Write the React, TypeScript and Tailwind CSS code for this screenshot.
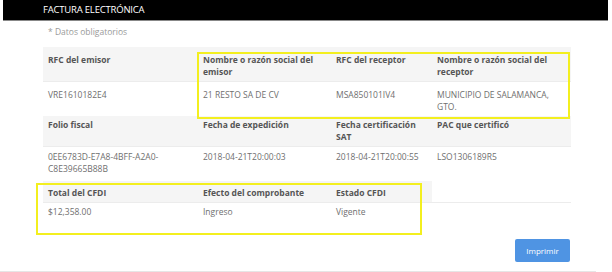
const font = { fontFamily: '"Open Sans", "Liberation Sans", sans-serif' };

type Cell = string;

function HeaderRow({ cells, pad, shadeCols = 4 }: { cells: Cell[]; pad: string; shadeCols?: number }) {
  return (
    <div className="grid grid-cols-[155px_133px_101px_139px] border-b border-[#ececec]">
      {cells.map((c, i) => (
        <div
          key={i}
          className={`px-[5px] ${pad} text-[8.5px] leading-[12px] font-bold text-[#555] ${i < shadeCols ? "bg-[#f5f5f5]" : ""}`}
        >
          {c}
        </div>
      ))}
    </div>
  );
}

function DataRow({ cells, pad }: { cells: Cell[]; pad: string }) {
  return (
    <div className="grid grid-cols-[155px_133px_101px_139px]">
      {cells.map((c, i) => (
        <div key={i} className={`px-[5px] ${pad} text-[8.5px] leading-[12px] text-[#6f6f6f]`}>
          {c}
        </div>
      ))}
    </div>
  );
}

export default function App() {
  return (
    <div className="relative w-[612px] h-[272px] bg-white overflow-hidden" style={font}>
      <div className="mx-[3px] w-[605px] h-[21px] bg-black border-b border-[#888] flex items-center pl-[40px]">
        <span className="text-white text-[9.5px] tracking-[-0.2px]">FACTURA ELECTRÓNICA</span>
      </div>

      <div className="pl-[48px] pt-[5px] text-[8.5px] leading-[12px] text-[#9a9a9a]">* Datos obligatorios</div>

      <div className="ml-[43px] mt-[9px] w-[528px]">
        <HeaderRow
          pad="pt-[7px] pb-[3px]"
          cells={["RFC del emisor", "Nombre o razón social del emisor", "RFC del receptor", "Nombre o razón social del receptor"]}
        />
        <DataRow
          pad="pt-[7px] pb-[3px]"
          cells={["VRE1610182E4", "21 RESTO SA DE CV", "MSA850101IV4", "MUNICIPIO DE SALAMANCA, GTO."]}
        />
        <HeaderRow
          pad="pt-[3px] pb-[3px]"
          cells={["Folio fiscal", "Fecha de expedición", "Fecha certificación SAT", "PAC que certificó"]}
        />
        <DataRow
          pad="pt-[4px] pb-[6px]"
          cells={["0EE6783D-E7A8-4BFF-A2A0-C8E39665B88B", "2018-04-21T20:00:03", "2018-04-21T20:00:55", "LSO1306189R5"]}
        />
        <HeaderRow
          pad="pt-[6px] pb-[3px]"
          shadeCols={3}
          cells={["Total del CFDI", "Efecto del comprobante", "Estado CFDI", ""]}
        />
        <DataRow pad="pt-[3px] pb-[4px]" cells={["$12,358.00", "Ingreso", "Vigente", ""]} />
      </div>

      <div className="flex justify-end pr-[42px] mt-[17px]">
        <button className="w-[55px] h-[23px] rounded-[2px] bg-[#4f94e3] text-white text-[8px]">Imprimir</button>
      </div>

      <div className="absolute left-0 top-[271px] w-[596px] h-px bg-[#e6e6e6]" />

      {/* yellow highlight boxes */}
      <div className="absolute left-[197px] top-[52px] w-[373px] h-[67px] border-2 border-[#f3ef1f]" />
      <div className="absolute left-[36px] top-[183px] w-[386px] h-[52px] border-2 border-[#f3ef1f]" />
    </div>
  );
}
